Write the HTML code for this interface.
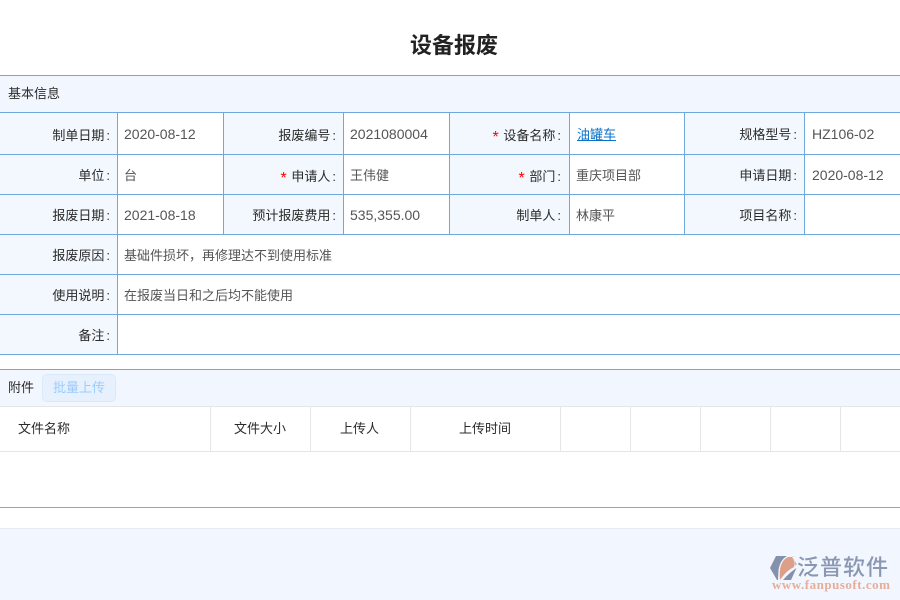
<!DOCTYPE html>
<html lang="zh"><head><meta charset="utf-8"><title>设备报废</title>
<style>
html,body{margin:0;padding:0;background:#fff}
body{width:900px;height:600px;position:relative;overflow:hidden;font-family:"Liberation Sans","Noto Sans CJK SC",sans-serif;font-size:13px;color:#333}
.a{position:absolute}
.bg{background:#f2f6fe}
.lb{background:#f2f8fe}
.h{position:absolute;left:0;width:900px;height:1px;background:#6fa8dc}
.v{position:absolute;width:1px;background:#6fa8dc}
.g{position:absolute;background:#e6e6e6}
.l{position:absolute;text-align:right;color:#2b2b2b;line-height:20px;white-space:nowrap}
.l i{font-style:normal;margin-left:2px}
.t{position:absolute;color:#555;line-height:20px;white-space:nowrap}
.n{font-size:14px}
.r{color:#f00;font-size:16px;line-height:10px;margin-right:1px;position:relative;top:2px}
.th{position:absolute;top:419px;line-height:20px;color:#2b2b2b;text-align:center;white-space:nowrap}
</style></head><body>
<div class="a" style="left:0;top:31px;width:908px;text-align:center;font-size:22px;font-weight:700;line-height:30px;color:#222">设备报废</div>

<div class="a bg" style="left:0;top:75px;width:900px;height:37px"></div>
<div class="a lb" style="left:0;top:112px;width:117px;height:242px"></div>
<div class="a lb" style="left:224px;top:112px;width:119px;height:122px"></div>
<div class="a lb" style="left:450px;top:112px;width:119px;height:122px"></div>
<div class="a lb" style="left:685px;top:112px;width:119px;height:122px"></div>

<div class="h" style="top:75px"></div>
<div class="h" style="top:112px"></div>
<div class="h" style="top:154px"></div>
<div class="h" style="top:194px"></div>
<div class="h" style="top:234px"></div>
<div class="h" style="top:274px"></div>
<div class="h" style="top:314px"></div>
<div class="h" style="top:354px"></div>
<div class="v" style="left:117px;top:112px;height:242px"></div>
<div class="v" style="left:223px;top:112px;height:122px"></div>
<div class="v" style="left:343px;top:112px;height:122px"></div>
<div class="v" style="left:449px;top:112px;height:122px"></div>
<div class="v" style="left:569px;top:112px;height:122px"></div>
<div class="v" style="left:684px;top:112px;height:122px"></div>
<div class="v" style="left:804px;top:112px;height:122px"></div>

<div class="a" style="left:8px;top:84px;line-height:20px;color:#2b2b2b">基本信息</div>

<div class="l" style="right:790px;top:126px">制单日期<i>:</i></div>
<div class="t n" style="left:124px;top:124px">2020-08-12</div>
<div class="l" style="right:564px;top:126px">报废编号<i>:</i></div>
<div class="t n" style="left:350px;top:124px">2021080004</div>
<div class="l" style="right:339px;top:126px"><span class="r">*</span> 设备名称<i>:</i></div>
<div class="t" style="left:577px;top:125px;color:#0a72c8;text-decoration:underline">油罐车</div>
<div class="l" style="right:103px;top:125px">规格型号<i>:</i></div>
<div class="t n" style="left:812px;top:124px">HZ106-02</div>

<div class="l" style="right:790px;top:166px">单位<i>:</i></div>
<div class="t" style="left:124px;top:166px">台</div>
<div class="l" style="right:564px;top:167px"><span class="r">*</span> 申请人<i>:</i></div>
<div class="t" style="left:350px;top:166px">王伟健</div>
<div class="l" style="right:339px;top:167px"><span class="r">*</span> 部门<i>:</i></div>
<div class="t" style="left:576px;top:166px">重庆项目部</div>
<div class="l" style="right:103px;top:166px">申请日期<i>:</i></div>
<div class="t n" style="left:812px;top:165px">2020-08-12</div>

<div class="l" style="right:790px;top:206px">报废日期<i>:</i></div>
<div class="t n" style="left:124px;top:205px">2021-08-18</div>
<div class="l" style="right:564px;top:206px">预计报废费用<i>:</i></div>
<div class="t n" style="left:350px;top:205px">535,355.00</div>
<div class="l" style="right:339px;top:206px">制单人<i>:</i></div>
<div class="t" style="left:576px;top:206px">林康平</div>
<div class="l" style="right:103px;top:206px">项目名称<i>:</i></div>

<div class="l" style="right:790px;top:246px">报废原因<i>:</i></div>
<div class="t" style="left:124px;top:246px">基础件损坏，再修理达不到使用标准</div>
<div class="l" style="right:790px;top:286px">使用说明<i>:</i></div>
<div class="t" style="left:124px;top:286px">在报废当日和之后均不能使用</div>
<div class="l" style="right:790px;top:326px">备注<i>:</i></div>

<div class="a bg" style="left:0;top:369px;width:900px;height:37px"></div>
<div class="h" style="top:369px"></div>
<div class="a" style="left:8px;top:378px;line-height:20px;color:#2b2b2b">附件</div>
<div class="a" style="left:42px;top:374px;width:72px;height:26px;border:1px solid #d9e9f9;background:#e6f1fd;border-radius:5px;text-align:center;line-height:25px;color:#9ccbfb">批量上传</div>

<div class="g" style="left:0;top:406px;width:900px;height:1px"></div>
<div class="g" style="left:0;top:451px;width:900px;height:1px"></div>
<div class="g" style="left:210px;top:407px;width:1px;height:44px"></div>
<div class="g" style="left:310px;top:407px;width:1px;height:44px"></div>
<div class="g" style="left:410px;top:407px;width:1px;height:44px"></div>
<div class="g" style="left:560px;top:407px;width:1px;height:44px"></div>
<div class="g" style="left:630px;top:407px;width:1px;height:44px"></div>
<div class="g" style="left:700px;top:407px;width:1px;height:44px"></div>
<div class="g" style="left:770px;top:407px;width:1px;height:44px"></div>
<div class="g" style="left:840px;top:407px;width:1px;height:44px"></div>
<div class="th" style="left:18px">文件名称</div>
<div class="th" style="left:234px">文件大小</div>
<div class="th" style="left:340px">上传人</div>
<div class="th" style="left:459px">上传时间</div>

<div class="a" style="left:0;top:507px;width:900px;height:1px;background:#7fabd0"></div>
<div class="a" style="left:0;top:528px;width:900px;height:72px;background:#f2f6fe;border-top:1px solid #e8ebf2;box-sizing:border-box"></div>

<svg class="a" style="left:760px;top:548px" width="140" height="48" viewBox="0 0 140 48">
<path d="M16 8 L27 8 Q20 12 18.500 22 L18 32 L17 32 L10 20 Z" fill="#8391ad"/>
<path d="M20 32 Q18 14 28 9 L32 9 Q36 14 34 19 Q27 22 20 32 Z" fill="#dd9f88"/>
<path d="M32.500 8 L33 8 L36.500 16 L35.500 18 Q36 12 32.500 8 Z" fill="#8391ad"/>
<path d="M23 32 Q29 25 36.500 20 L31 32 Z" fill="#8391ad"/>
<text x="37" y="27" font-family="'Noto Sans CJK SC',sans-serif" font-size="22" font-weight="500" fill="#8a97b3" textLength="91">泛普软件</text>
<text x="12" y="41" font-family="'Liberation Serif',serif" font-size="13" font-weight="700" fill="#e8ad98" textLength="118" lengthAdjust="spacing">www.fanpusoft.com</text>
</svg>
</body></html>
